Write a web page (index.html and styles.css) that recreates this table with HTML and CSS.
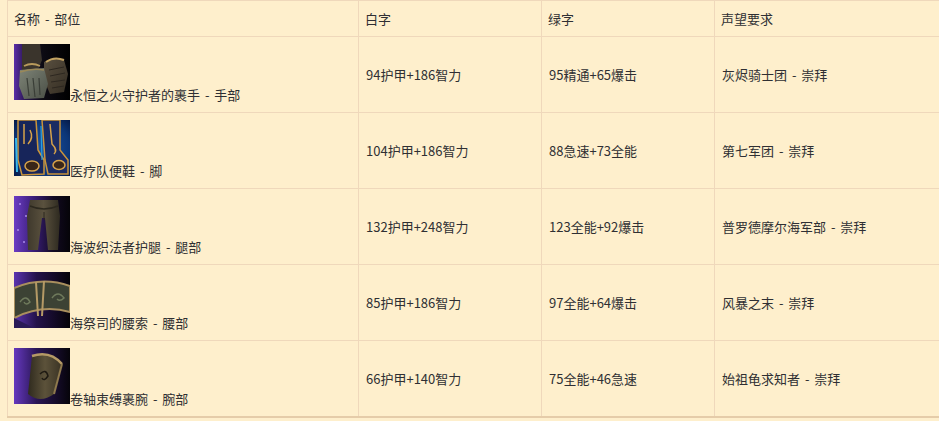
FILE: index.html
```html
<!DOCTYPE html>
<html lang="zh-CN">
<head>
<meta charset="utf-8">
<title>装备列表</title>
<link rel="stylesheet" href="styles.css">
</head>
<body>
<table class="gear">
  <colgroup>
    <col class="c-name">
    <col class="c-white">
    <col class="c-green">
    <col class="c-rep">
  </colgroup>
  <thead>
    <tr><th>名称 - 部位</th><th>白字</th><th>绿字</th><th>声望要求</th></tr>
  </thead>
  <tbody>
    <tr>
      <td class="name"><svg class="icon" viewBox="0 0 56 56" width="56" height="56">
        <defs>
          <linearGradient id="g1bg" x1="0" x2="1" y1="0" y2="0"><stop offset="0" stop-color="#5a2ea8"/><stop offset="0.2" stop-color="#2a1650"/><stop offset="0.5" stop-color="#0d0b14"/><stop offset="1" stop-color="#000"/></linearGradient>
          <linearGradient id="g1a" x1="0" x2="1" y1="0" y2="1"><stop offset="0" stop-color="#7f8578"/><stop offset="1" stop-color="#4a4f46"/></linearGradient>
          <linearGradient id="g1b" x1="0" x2="1" y1="0" y2="1"><stop offset="0" stop-color="#5a5040"/><stop offset="1" stop-color="#332c22"/></linearGradient>
        </defs>
        <rect width="56" height="56" fill="url(#g1bg)"/>
        <path d="M8 0 L26 0 L28 16 L24 26 L8 26 Z" fill="#3a342c"/>
        <path d="M10 22 Q18 18 26 22" stroke="#b89a5c" stroke-width="1.8" fill="none"/>
        <path d="M30 18 Q40 12 50 16 L54 30 L50 48 L36 50 L30 36 Z" fill="url(#g1b)"/>
        <path d="M32 18 Q40 12 50 16" stroke="#c2a262" stroke-width="2" fill="none"/>
        <path d="M35 26 L50 23 M36 32 L51 29 M37 38 L51 36 M38 44 L50 42" stroke="#2a251e" stroke-width="0.9"/>
        <path d="M6 26 L30 24 L34 40 L30 54 L10 55 L5 42 Z" fill="url(#g1a)"/>
        <path d="M13 34 L15 52 M19 34 L21 53 M25 34 L26 51" stroke="#3a3e37" stroke-width="1.2"/>
        <path d="M6 28 Q18 24 30 26" stroke="#9a8858" stroke-width="1.5" fill="none"/>
      </svg>永恒之火守护者的裹手 - 手部</td>
      <td>94护甲+186智力</td>
      <td>95精通+65爆击</td>
      <td>灰烬骑士团 - 崇拜</td>
    </tr>
    <tr>
      <td class="name"><svg class="icon" viewBox="0 0 56 56" width="56" height="56">
        <defs>
          <radialGradient id="g2bg" cx="0.5" cy="0.5" r="0.7"><stop offset="0" stop-color="#1a56a8"/><stop offset="0.7" stop-color="#0c3678"/><stop offset="1" stop-color="#061a48"/></radialGradient>
        </defs>
        <rect width="56" height="56" fill="url(#g2bg)"/>
        <path d="M4 0 L22 0 L24 30 L30 40 L30 54 L8 55 L4 40 Z" fill="#17255a" stroke="#c9933a" stroke-width="1.5"/>
        <path d="M28 0 L46 0 L46 30 L54 40 L54 54 L34 54 L31 40 Z" fill="#1b2b62" stroke="#c9933a" stroke-width="1.5"/>
        <path d="M10 4 L10 24 M16 10 Q20 18 14 24" stroke="#d6a24a" stroke-width="1.5" fill="none"/>
        <path d="M36 4 L38 24 Q44 30 40 34" stroke="#d6a24a" stroke-width="1.5" fill="none"/>
        <ellipse cx="18" cy="46" rx="7" ry="5" fill="#3a2618" stroke="#d6a24a" stroke-width="1.5"/>
        <ellipse cx="45" cy="45" rx="6" ry="4.5" fill="#3a2618" stroke="#d6a24a" stroke-width="1.5"/>
        <path d="M2 18 L3 52" stroke="#38b8ec" stroke-width="2"/>
        <path d="M27 6 L28 40" stroke="#2aa0dc" stroke-width="1.2"/>
      </svg>医疗队便鞋 - 脚</td>
      <td>104护甲+186智力</td>
      <td>88急速+73全能</td>
      <td>第七军团 - 崇拜</td>
    </tr>
    <tr>
      <td class="name"><svg class="icon" viewBox="0 0 56 56" width="56" height="56">
        <defs>
          <linearGradient id="g3bg" x1="0" x2="1" y1="0" y2="0"><stop offset="0" stop-color="#6b3cc4"/><stop offset="0.35" stop-color="#3a1e78"/><stop offset="0.7" stop-color="#120a22"/><stop offset="1" stop-color="#050408"/></linearGradient>
          <linearGradient id="g3p" x1="0" x2="1" y1="0" y2="0"><stop offset="0" stop-color="#3e382c"/><stop offset="0.5" stop-color="#5a513e"/><stop offset="1" stop-color="#2e2a20"/></linearGradient>
        </defs>
        <rect width="56" height="56" fill="url(#g3bg)"/>
        <circle cx="6" cy="8" r="1" fill="#a98ae8"/><circle cx="12" cy="20" r="1" fill="#a98ae8"/><circle cx="4" cy="34" r="1" fill="#a98ae8"/><circle cx="10" cy="46" r="1" fill="#a98ae8"/>
        <path d="M16 4 L44 4 L46 20 L44 54 L34 54 L31 22 L28 22 L24 54 L14 54 L13 20 Z" fill="url(#g3p)"/>
        <path d="M16 10 Q30 16 44 10" stroke="#2c281e" stroke-width="1.5" fill="none"/>
        <path d="M30 16 L30 24" stroke="#2c281e" stroke-width="1"/>
      </svg>海波织法者护腿 - 腿部</td>
      <td>132护甲+248智力</td>
      <td>123全能+92爆击</td>
      <td>普罗德摩尔海军部 - 崇拜</td>
    </tr>
    <tr>
      <td class="name"><svg class="icon" viewBox="0 0 56 56" width="56" height="56">
        <defs>
          <linearGradient id="g4bg" x1="0" x2="1" y1="0" y2="0"><stop offset="0" stop-color="#5b34b0"/><stop offset="0.4" stop-color="#24124a"/><stop offset="1" stop-color="#050308"/></linearGradient>
        </defs>
        <rect width="56" height="56" fill="url(#g4bg)"/>
        <path d="M0 16 Q28 4 56 14 L56 40 Q28 32 0 46 Z" fill="#3c4234" stroke="#a98f5e" stroke-width="2"/>
        <path d="M22 10 L24 44 M30 9 L28 44" stroke="#b59a66" stroke-width="2"/>
        <path d="M6 30 Q12 22 16 30 Q12 34 10 30" stroke="#6f7a5c" stroke-width="1.5" fill="none"/>
        <path d="M38 26 Q44 18 50 26 Q46 30 43 27" stroke="#6f7a5c" stroke-width="1.5" fill="none"/>
        <path d="M0 46 L20 56 L0 56 Z" fill="#2a1a56"/>
      </svg>海祭司的腰索 - 腰部</td>
      <td>85护甲+186智力</td>
      <td>97全能+64爆击</td>
      <td>风暴之末 - 崇拜</td>
    </tr>
    <tr>
      <td class="name"><svg class="icon" viewBox="0 0 56 56" width="56" height="56">
        <defs>
          <linearGradient id="g5bg" x1="0" x2="1" y1="0" y2="0"><stop offset="0" stop-color="#6538be"/><stop offset="0.4" stop-color="#2a1656"/><stop offset="1" stop-color="#06040a"/></linearGradient>
          <linearGradient id="g5b" x1="0" x2="1" y1="0" y2="0"><stop offset="0" stop-color="#2f2a1e"/><stop offset="0.5" stop-color="#5c523a"/><stop offset="1" stop-color="#3a3324"/></linearGradient>
        </defs>
        <rect width="56" height="56" fill="url(#g5bg)"/>
        <path d="M18 8 Q36 2 48 16 L40 46 Q26 56 14 46 Z" fill="url(#g5b)"/>
        <path d="M18 8 Q36 2 48 16" stroke="#b59a66" stroke-width="2.5" fill="none"/>
        <path d="M48 16 L40 46" stroke="#8f7a4e" stroke-width="2"/>
        <path d="M26 26 Q32 20 34 28 Q30 34 28 30" stroke="#1e1a12" stroke-width="1.5" fill="none"/>
      </svg>卷轴束缚裹腕 - 腕部</td>
      <td>66护甲+140智力</td>
      <td>75全能+46急速</td>
      <td>始祖龟求知者 - 崇拜</td>
    </tr>
  </tbody>
</table>
</body>
</html>
```

FILE: styles.css
```css
html, body {
  background: #feefcc;
}
body {
  margin: 0 0 0 7px;
  font-family: "Noto Sans CJK SC", "Noto Sans", sans-serif;
  font-size: 13px;
  color: #2f2f33;
}
.gear {
  border-collapse: collapse;
  table-layout: fixed;
  width: 932px;
}
.c-name { width: 351px; }
.c-white { width: 183px; }
.c-green { width: 173px; }
.gear th,
.gear td {
  border: 1px solid #efd8bb;
  padding: 6px 7px 6px 6px;
  text-align: left;
  font-weight: normal;
  line-height: 23px;
  vertical-align: middle;
  white-space: nowrap;
  word-spacing: 2px;
}
.gear th:last-child,
.gear td:last-child {
  border-right: none;
}
.gear td {
  height: 63px;
  padding-left: 7px;
}
.gear td.name {
  padding-left: 6px;
}
.gear tbody tr:last-child td {
  border-bottom: 2px solid #e5cca9;
}
.icon {
  display: inline-block;
  vertical-align: baseline;
  width: 56px;
  height: 56px;
}
```
